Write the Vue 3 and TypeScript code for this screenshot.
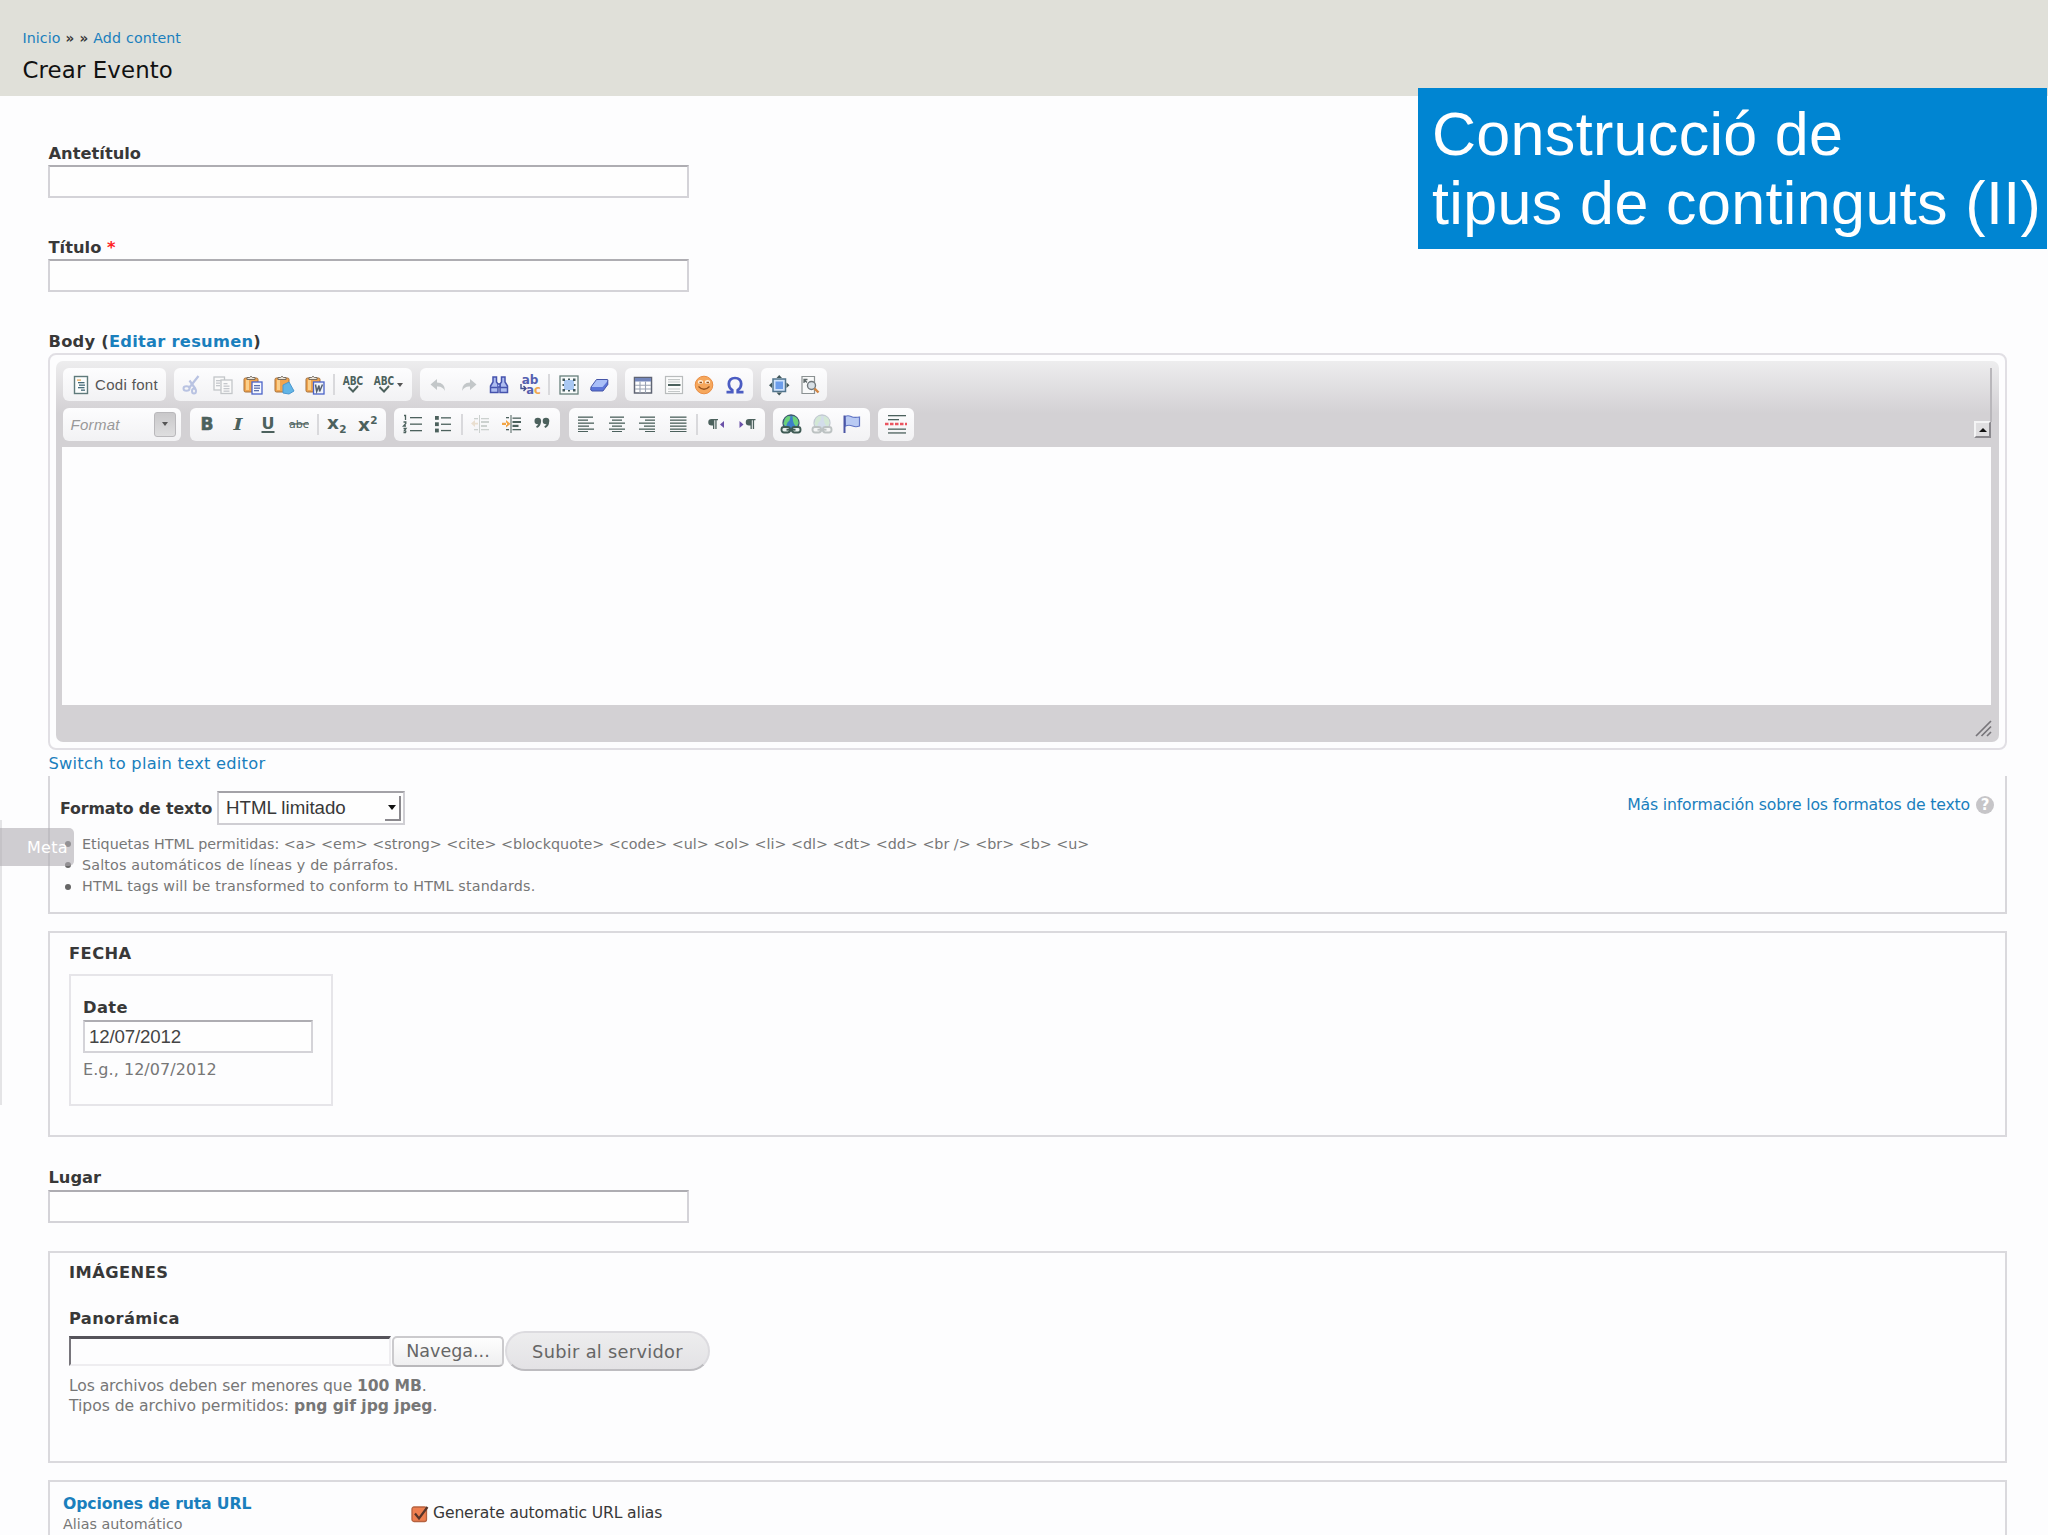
<script setup lang="ts">
interface Item { icon?: string; sep?: boolean; wide?: boolean }
const items = (s: string): Item[] => s.split(' ').map((n) => (n === '|' ? { sep: true } : { icon: n, wide: n === 'scayt' }))

const row1: Item[][] = [
  items('cut copy paste pastetext pasteword | spell scayt'),
  items('undo redo find replace | selectall eraser'),
  items('table hr smiley omega'),
  items('maximize preview'),
]
const row2: Item[][] = [
  items('bold italic underline strike | sub sup'),
  items('ol ul | outdent indent quote'),
  items('left center right justify | ltr rtl'),
  items('link unlink flag'),
  items('pagebreak'),
]

const G = '#4c615d'
const lines = (rows: number[][], c = G) =>
  rows.map(([x, y, w, h]) => `<rect x="${x}" y="${y}" width="${w}" height="${h || 1.3}" fill="${c}"/>`).join('')
const label = (t: string, x: number, y: number, size: number, extra = '', c = G) =>
  `<text x="${x}" y="${y}" font-size="${size}" text-anchor="middle" font-family="DejaVu Sans, sans-serif" font-weight="bold" fill="${c}" ${extra}>${t}</text>`
const clipboard = (front: string) =>
  `<rect x="1" y="3" width="14" height="14" rx="1.5" fill="#f0a44e" stroke="#a5703a"/><rect x="3" y="5" width="3" height="10" fill="#fbd08c"/><path d="M4 4.5V2.5h2.5Q8 0 9.500 2.500H12v2Z" fill="#ece6dc" stroke="#6d6459" stroke-width=".9"/>${front}`
const chain = (c: string, f: string) =>
  `<rect x=".5" y="13" width="8.500" height="5.500" rx="2.400" fill="${f}" stroke="${c}" stroke-width="1.900"/><rect x="11" y="13" width="8.500" height="5.500" rx="2.400" fill="${f}" stroke="${c}" stroke-width="1.900"/><path d="M5.500 15.700h9" stroke="${c}" stroke-width="1.900"/>`
const globe = (sea: string, land: string, edge: string) =>
  `<circle cx="10" cy="9" r="8" fill="${sea}" stroke="${edge}" stroke-width="1.300"/><path d="M4 4.500Q7 1 9.500 2.500L8.500 6.500 6.500 8.500 5 12.500 2.500 10ZM11.500 2Q17.500 3 17.500 9l-2 4-2.500-3-1-3Z" fill="${land}"/>`

const icons: Record<string, string> = {
  source: `<rect x="3.500" y="1.500" width="13" height="17" fill="#fbfdfd" stroke="#5f7a7b" stroke-width="1.400"/>` +
    lines([[6, 4.5, 4, 1.2]], '#e8a24a') + lines([[7, 7, 6.500, 1.3], [8, 9.5, 6, 1.3], [7, 12, 6.500, 1.3], [10, 14.500, 4, 1.300]], '#456a78'),
  cut: `<g fill="none" stroke="#b9c3e2"><path d="M16.500 1 7 13M7.500 5.500 13.500 14" stroke-width="2.200"/><ellipse cx="4.500" cy="13.500" rx="3" ry="2.200" stroke-width="2"/><ellipse cx="12" cy="16" rx="2" ry="2.600" stroke-width="2"/></g>`,
  copy: `<g fill="#fafafa" stroke="#c3c6c9" stroke-width="1.300"><rect x="1" y="2" width="10.500" height="13"/><rect x="8" y="5" width="11" height="13.500"/></g>` +
    lines([[3, 5, 5], [3, 7.500, 4], [3, 10, 4], [10.500, 8, 4], [10.500, 10.500, 6], [10.500, 13, 6], [10.500, 15.500, 6]], '#c5c8cc'),
  paste: clipboard(`<rect x="9" y="7" width="10" height="12" fill="#f6f9ff" stroke="#4a63c8" stroke-width="1.300"/>` + lines([[11, 10, 6], [11, 12.500, 6], [11, 15, 5]], '#5a6fae')),
  pastetext: clipboard(`<path d="m9 10 6-3 5 9-5 3-6-1Z" fill="#62b5e6" stroke="#4a97cf"/>`),
  pasteword: clipboard(`<rect x="8.500" y="7" width="10.500" height="12" fill="#f1f4fb" stroke="#4a63c8" stroke-width="1.300"/><path d="m10.500 9.500 1.200 7 2.300-6 .6 6L17.500 9.500" fill="none" stroke="#56616e" stroke-width="1.500"/>`),
  spell: label('ABC', 10, 10, 11.5, 'textLength="20.500" lengthAdjust="spacingAndGlyphs"') + `<path d="m5.500 12 4.500 4.500 5-5.500" fill="none" stroke="${G}" stroke-width="1.900"/>`,
  undo: `<path d="M2.500 9.500 9 4v3.500q8 0 8 8.500-2.500-5-8-4.500V15Z" fill="#c3c7c9"/>`,
  redo: `<path d="M17.500 9.500 11 4v3.500q-8 0-8 8.500 2.500-5 8-4.500V15Z" fill="#c3c7c9"/>`,
  find: `<g fill="#aebcf0" stroke="#4653ad" stroke-width="1.500"><path d="M4 2h3.500v5L9 9v8.500H1.500V11L4 7ZM16 2h-3.500v5L11 9v8.500h7.500V11L16 7Z"/><path d="M9 9h2v3H9M2 12.500h6.500M11.500 12.500h6.500"/></g>`,
  replace: label('ab', 10, 8.800, 12, '', '#5560b0') + label('a<tspan fill="#f0a850">c</tspan>', 13.500, 18.500, 11.500, '', '#5560b0') + `<path d="M1 9v4.500h4.500M3.500 11 6 13.500 3.500 16" fill="none" stroke="#44508f" stroke-width="1.400"/>`,
  selectall: `<rect x="1" y="1" width="18" height="18" fill="#f7fafa" stroke="#68807c" stroke-width="1.300"/><rect x="5" y="5" width="10" height="10" fill="#a9c8f2"/><g fill="#42585c"><path d="M3.500 3.500h2.500v2.500H3.500ZM14 3.500h2.500v2.500H14ZM3.500 14h2.500v2.500H3.500ZM14 14h2.500v2.500H14Z"/><path d="M9 3.500h2v1.500H9ZM9 15h2v1.500H9ZM3.500 9H5v2H3.500ZM15 9h1.500v2H15Z"/></g>`,
  eraser: `<path d="M7.500 4.500H18q1.500 0 .8 1.500l-5 6H2Z" fill="#a9bff8"/><path d="M2 12h11.500l5.500-6.500v4L14 16H3q-2 0-1-4Z" fill="#5b75d8"/><path d="M7.500 4.500H18q1.500 0 .8 1.500v3.500L14 16H3q-2 0-1-4Z" fill="none" stroke="#4656a8"/>`,
  table: `<rect x="1.500" y="2.500" width="17" height="15.500" fill="#fff" stroke="#5f6473" stroke-width="1.500"/><rect x="2" y="3" width="16" height="3.500" fill="#7386bb"/><path d="M2 10.200h16M2 14h16M7 6.500V18M12.500 6.500V18" stroke="#9aa3b3" stroke-width="1.100"/>`,
  hr: `<rect x="1.500" y="1.500" width="17" height="17" fill="#fcfcfc" stroke="#b9bcbd" stroke-width="1.200"/>` + lines([[4, 4, 12, 1.2], [4, 6.500, 12, 1], [4, 13.500, 12, 1], [4, 16, 12, 1]], '#c4c8c8') + lines([[4, 9, 12.500, 2]], '#4c615d'),
  smiley: `<circle cx="10" cy="10" r="8.800" fill="#f6a75c" stroke="#e98d43"/><ellipse cx="6.500" cy="7" rx="2.700" ry="2" fill="#fff1dc"/><ellipse cx="13.500" cy="7" rx="2.700" ry="2" fill="#fff1dc"/><path d="M5.500 7.500h2.500M12.500 7.500H15M4.500 11.500q5.500 5.500 11 0" fill="none" stroke="#93521d" stroke-width="1.300"/>`,
  omega: `<path d="M1.500 17.200h5.800v-2Q3.800 13 3.800 8.800 4.200 3 10 3t6.200 5.800q0 4.200-3.500 6.400v2h5.800" fill="none" stroke="#4b5cc2" stroke-width="2.700"/>`,
  maximize: `<rect x="4" y="4" width="12.500" height="12.500" fill="#cfe2fb" stroke="#51748c" stroke-width="1.500"/><rect x="6.500" y="6.500" width="7.500" height="7.500" fill="#6c9deb"/><path d="M10.200 0 7.500 3h5.500ZM10.200 20.500l-2.700-3h5.500ZM0 10.200l3-2.700v5.500ZM20.500 10.200l-3-2.700v5.500Z" fill="#41575a"/>`,
  preview: `<path d="M2 1.500h12.500v17H2Z" fill="#f8f9f9" stroke="#8b9192" stroke-width="1.200"/><path d="M4 8V4.500h3.500M4 4.500l3 3" fill="none" stroke="#606a6b" stroke-width="1.300"/><circle cx="11.500" cy="10.500" r="4" fill="#d8e0e6" stroke="#70777b" stroke-width="1.400"/><path d="m14.500 13.500 4 4" stroke="#d08542" stroke-width="2.400"/>`,
  bold: label('B', 10, 16, 17, 'stroke="#4c615d" stroke-width=".6"'),
  italic: `<text x="10" y="16" font-size="17.500" text-anchor="middle" font-family="DejaVu Serif, serif" font-weight="bold" font-style="italic" fill="${G}" textLength="9" lengthAdjust="spacingAndGlyphs">I</text>`,
  underline: label('U', 10, 14.500, 16) + lines([[3.5, 17, 13, 2]]),
  strike: `<text x="10" y="13.500" font-size="11" text-anchor="middle" font-family="DejaVu Sans, sans-serif" fill="${G}">abc</text>` + lines([[0, 9.300, 20, 1.3]]),
  sub: label('x', 6, 14.500, 18.500) + label('2', 15.800, 19, 10.500),
  sup: label('x', 6, 16.500, 18.500) + label('2', 15.800, 9.500, 10.500),
  ol: lines([[8, 3, 12], [8, 9.500, 12], [8, 16, 12]]) + `<path d="M2 1.500h1.500V6M1.500 8h2.300v1.500L1.500 12h2.500M1.500 14.500H4L2.500 16.500q2 0 1 2h-2" fill="none" stroke="${G}" stroke-width="1.300"/>`,
  ul: lines([[2, 2, 3.800, 3.800], [2, 8.300, 3.800, 3.800], [2, 14.600, 3.800, 3.800], [8, 3.200, 10], [8, 9.600, 10], [8, 15.900, 10]]),
  outdent: lines([[8, 1, 1, 18], [3, 4, 4], [10, 4, 8], [10, 7, 8, 2], [10, 11, 6, 2], [3, 15, 4], [10, 15, 8]], '#ccd1cf') + `<path d="M0 9.500 4 6v7ZM3 8.700h4v1.800H3Z" fill="#eadfd0"/>`,
  indent: lines([[8.500, 1, 1, 18], [4, 3, 3], [10.500, 3.500, 8.500], [10.500, 7, 8.500, 2], [10.500, 10.800, 6, 2.200], [4, 15, 3], [10.500, 15, 8.500]]) + `<path d="M8.500 9.800 4 6v7.600ZM0 8.700h5v2.200H0Z" fill="#f2a545"/>`,
  quote: `<g fill="${G}"><circle cx="5.800" cy="7" r="3.300"/><circle cx="14" cy="7" r="3.300"/></g><path d="M7.700 7.500Q8 11.500 4.500 13.200M16 7.500Q16.300 11.500 12.700 13.200" fill="none" stroke="${G}" stroke-width="2"/>`,
  left: lines([[2, 2.500, 15], [2, 5.500, 10], [2, 8.500, 16], [2, 11.500, 11], [2, 14.500, 16], [2, 17, 10, 1]]),
  center: lines([[3, 2.500, 14], [5, 5.500, 10], [2, 8.500, 16], [5, 11.500, 10], [2, 14.500, 16], [5, 17, 10, 1]]),
  right: lines([[3, 2.500, 15], [8, 5.500, 10], [2, 8.500, 16], [7, 11.500, 11], [2, 14.500, 16], [8, 17, 10, 1]]),
  justify: lines([[2, 2.500, 16.500], [2, 5.500, 16.500], [2, 8.500, 16.500], [2, 11.500, 16.500], [2, 14.500, 16.500], [2, 17, 16.500, 1]]),
  ltr: `<path d="M11 5H5.500a3 3 0 0 0 0 6.500H7V15h1.300V6.300h1V15h1.300V6.300H12V5Z" fill="${G}"/><path d="M18 7v7l-4-3.500Z" fill="#6a50a8"/>`,
  rtl: `<path d="M17.500 5H12a3 3 0 0 0 0 6.500h1.500V15h1.300V6.300h1V15h1.300V6.300h1.400V5Z" fill="${G}"/><path d="M2.500 7v7l4-3.500Z" fill="#6a50a8"/>`,
  link: globe('#3d7fc9', '#6bd27a', '#40586e') + chain('#3f5b54', '#e9f1ee'),
  unlink: globe('#d3ddea', '#d3e8d5', '#c3cad2') + chain('#bcc2c2', '#f4f5f5'),
  flag: `<path d="M3 2.500Q6 1 9 2.500t8.500.5v9Q14 13.500 10.500 12T3.500 12Z" fill="#b9caf3" stroke="#6074c4" stroke-width="1.200"/><path d="M2.500 1.500v17.500" stroke="#4c56a5" stroke-width="2"/>`,
  pagebreak: lines([[2, 1, 18], [2, 5, 11], [2, 14.500, 18], [2, 18.300, 18]]) + `<path d="M-1 10h22" stroke="#ea5560" stroke-width="2.600" stroke-dasharray="3.500 1.500"/>`,
}
icons.scayt = icons.spell
</script>

<template>
  <div class="page">
    <header class="head">
      <nav class="crumb"><a>Inicio</a> <b>»</b> <b>»</b> <a>Add content</a></nav>
      <h1>Crear Evento</h1>
    </header>
    <div class="banner"><div>Construcció de</div><div class="second">tipus de continguts (II)</div></div>

    <main class="form">
      <div class="field"><label>Antetítulo</label><div class="input"></div></div>
      <div class="field"><label>Título <i class="req">*</i></label><div class="input"></div></div>

      <label class="body-label">Body (<a>Editar resumen</a>)</label>
      <section class="editor">
        <div class="chrome">
          <div class="bar first">
            <div class="group source"><svg viewBox="0 0 20 20" v-html="icons.source"></svg><span>Codi font</span></div>
            <div v-for="(g, k) in row1" :key="k" class="group">
              <template v-for="(it, n) in g" :key="n">
                <span v-if="it.sep" class="sep"></span>
                <span v-else class="cell" :class="{ wide: it.wide }"><svg viewBox="0 0 20 20" v-html="icons[it.icon!]"></svg><b v-if="it.wide" class="caret"></b></span>
              </template>
            </div>
          </div>
          <div class="bar second-row">
            <div class="group format"><span>Format</span><span class="drop"><b class="caret"></b></span></div>
            <div v-for="(g, k) in row2" :key="k" class="group">
              <template v-for="(it, n) in g" :key="n">
                <span v-if="it.sep" class="sep"></span>
                <span v-else class="cell"><svg viewBox="0 0 20 20" v-html="icons[it.icon!]"></svg></span>
              </template>
            </div>
          </div>
          <div class="canvas"></div>
          <span class="edge"></span>
          <span class="collapse"><b></b></span>
          <svg class="grip" viewBox="0 0 17 17"><path d="M1 16 16 1M6.500 16 16 6.500M12 16l4-4" stroke="#77757a" stroke-width="1.700" /></svg>
        </div>
      </section>
      <a class="switch">Switch to plain text editor</a>

      <section class="filter">
        <div class="filter-row">
          <b class="lbl">Formato de texto</b>
          <div class="select"><span>HTML limitado</span><span class="arrow"><b></b></span></div>
          <a class="help"><span>Más información sobre los formatos de texto</span><span class="q">?</span></a>
        </div>
        <ul>
          <li class="tags">Etiquetas HTML permitidas: &lt;a&gt; &lt;em&gt; &lt;strong&gt; &lt;cite&gt; &lt;blockquote&gt; &lt;code&gt; &lt;ul&gt; &lt;ol&gt; &lt;li&gt; &lt;dl&gt; &lt;dt&gt; &lt;dd&gt; &lt;br /&gt; &lt;br&gt; &lt;b&gt; &lt;u&gt;</li>
          <li class="spaced">Saltos automáticos de líneas y de párrafos.</li>
          <li class="spaced">HTML tags will be transformed to conform to HTML standards.</li>
        </ul>
      </section>

      <section class="set fecha">
        <h2>FECHA</h2>
        <div class="date">
          <label>Date</label>
          <div class="input">12/07/2012</div>
          <p>E.g., 12/07/2012</p>
        </div>
      </section>

      <div class="field lugar"><label>Lugar</label><div class="input"></div></div>

      <section class="set imagenes">
        <h2>IMÁGENES</h2>
        <label>Panorámica</label>
        <div class="upload">
          <div class="file"></div>
          <button class="browse">Navega...</button>
          <button class="send">Subir al servidor</button>
        </div>
        <p class="limit">Los archivos deben ser menores que <b>100 MB</b>.</p>
        <p>Tipos de archivo permitidos: <b>png gif jpg jpeg</b>.</p>
      </section>

      <section class="set url">
        <div class="tab"><a>Opciones de ruta URL</a><small>Alias automático</small></div>
        <div class="check">
          <svg viewBox="0 0 18 18"><rect x="1" y="2" width="14.500" height="14.500" rx="2" fill="#ee7f50" stroke="#b5623f" stroke-width="1.300" /><path d="m4 8.500 4 5L16.500 2" fill="none" stroke="#57352a" stroke-width="2.200" /></svg>
          <span>Generate automatic URL alias</span>
        </div>
      </section>
    </main>

    <div class="drawer-shadow"></div>
    <div class="meta">Meta</div>
  </div>
</template>

<style>
body { margin: 0; overflow: hidden; background: #fdfdfe; }
</style>
<style scoped>
* { box-sizing: border-box; }
.page { position: relative; width: 2048px; height: 1535px; overflow: hidden; background: #fdfdfe; color: #383838; font: 16px "DejaVu Sans", sans-serif; }
a { color: #1a7fbd; }
.head { height: 96px; padding: 28px 0 0 22.500px; background: #e0e0d9; }
.crumb { height: 20px; line-height: 20px; font-size: 14.200px; letter-spacing: .07px; word-spacing: .5px; }
.crumb b { font-size: 13.500px; }
h1 { margin: 8px 0 0; font-weight: normal; font-size: 22.800px; line-height: 28px; letter-spacing: .15px; color: #111; }
.banner { position: absolute; left: 1418px; top: 88px; width: 629px; height: 161px; padding: 12px 0 0 14px; background: #0085d2; color: #fff; font: 61px/69px "Liberation Sans", sans-serif; letter-spacing: .32px; white-space: nowrap; }
.second { letter-spacing: .38px; }
.form { padding: 47px 41px 0 48px; white-space: nowrap; }
label { display: block; height: 21px; margin-bottom: 1px; padding-left: .5px; font-weight: bold; font-size: 16.300px; line-height: 21px; }
.body-label { letter-spacing: .25px; }
.req { color: #f22; font-style: normal; }
.field { margin-bottom: 39px; }
.input { width: 641px; height: 33px; border: 2px solid #d4d3d8; border-top-color: #aeadb2; background: #fefefe; }
.editor { height: 397px; padding: 6px; border: 2px solid #e1dfe4; border-radius: 8px; }
.chrome { position: relative; height: 381px; padding: 7px 8px 0 6px; border-radius: 7px; background: linear-gradient(#ededee, #d3d1d4 52px); }
.bar { display: flex; gap: 8px; height: 33px; margin-bottom: 6.500px; padding-left: 1px; }
.second-row { gap: 8.500px; }
.group { display: flex; align-items: center; height: 33px; padding: 0 2.500px; border-radius: 6px; background: linear-gradient(#fdfdfe, #f2f2f4); }
.cell { display: flex; align-items: center; justify-content: center; width: 30.550px; height: 33px; }
.first .cell { width: 30.700px; }
.cell svg { flex: none; width: 20px; height: 20px; overflow: visible; }
.first .wide { width: 41px; justify-content: flex-start; padding-left: 5px; gap: 3px; }
.sep { width: 2px; height: 21px; margin: 0 3px; background: #d9d9dc; }
.caret { border: 3.500px solid transparent; border-top: 4px solid #555; border-bottom: 0; }
.source { width: 103px; padding-left: 7.500px; gap: 4.500px; font: 15px "Liberation Sans", sans-serif; letter-spacing: .33px; color: #555; }
.source svg { width: 20px; height: 20px; }
.format { width: 118px; padding: 0 5px 0 7.500px; justify-content: space-between; font: italic 15px "Liberation Sans", sans-serif; letter-spacing: .3px; color: #999; }
.drop { display: flex; align-items: center; justify-content: center; width: 22px; height: 25px; border: 1px solid #b9b8bb; border-radius: 3px; background: linear-gradient(#c9c8ca, #dededf); }
.canvas { height: 258px; margin-top: 6px; background: #fdfdfe; }
.edge { position: absolute; right: 7px; top: 7px; width: 2px; height: 54px; background: #b9b7bb; }
.collapse { position: absolute; right: 8px; top: 60px; width: 17px; height: 17px; display: flex; align-items: center; justify-content: center; border: 2px solid; border-color: #f4f4f5 #8b898e #8b898e #f4f4f5; background: #dfdee0; }
.collapse b { border: 4px solid transparent; border-bottom: 4px solid #111; border-top: 0; }
.grip { position: absolute; right: 7px; bottom: 5px; width: 17px; height: 17px; }
.switch { display: block; height: 20px; margin: 4px 0 2px .5px; line-height: 20px; font-size: 16.300px; letter-spacing: .23px; }
.filter { height: 138px; padding: 15px 10px 0; border: 2px solid #d8d7db; border-top: 0; }
.filter-row { display: flex; align-items: center; height: 34px; }
.lbl { width: 152px; font-size: 15.800px; letter-spacing: -.12px; }
.select { display: flex; align-items: center; justify-content: space-between; width: 188px; height: 34px; margin-left: 5px; padding: 0 2px 0 7px; border: 2px solid #cfced3; border-top-color: #a3a2a7; font: 18.700px "Liberation Sans", sans-serif; background: #fefefe; }
.arrow { display: flex; align-items: center; justify-content: center; width: 16px; height: 25px; border-right: 2px solid #8b898e; border-bottom: 2px solid #8b898e; }
.arrow b { border: 4px solid transparent; border-top: 5px solid #111; border-bottom: 0; }
.help { display: flex; align-items: center; margin: 0 1px 7px auto; font-size: 15.700px; letter-spacing: -.17px; }
.q { display: flex; align-items: center; justify-content: center; width: 18px; height: 18px; margin-left: 6px; border-radius: 50%; background: #c6c5c8; color: #fff; font-size: 15px; font-weight: bold; }
ul { margin: 8.500px 0 0; padding: 0; list-style: none; font-size: 14.300px; line-height: 21.300px; color: #777; }
li { display: flex; align-items: center; padding-left: 5px; }
.spaced { letter-spacing: .16px; }
li::before { content: ""; width: 6px; height: 6px; margin-right: 11px; border-radius: 50%; background: #666; }
.set { border: 2px solid #dad9dd; }
h2 { margin: 0; font-size: 16.300px; line-height: 20px; letter-spacing: .45px; }
p { margin: 0; color: #777; }
.fecha { height: 206px; margin-top: 17px; padding: 11px 19px 0; }
.date { width: 264px; height: 132px; margin-top: 10px; padding: 21px 12px 0; border: 2px solid #e6e5e9; }
.date label { padding: 0; letter-spacing: .4px; margin-bottom: 2px; }
.date .input { width: 230px; padding-left: 4px; font: 18.700px/29px "Liberation Sans", sans-serif; letter-spacing: -.15px; color: #444; }
.date p { margin-top: 7px; line-height: 20px; letter-spacing: .05px; }
.lugar { margin: 30px 0 28px; }
.lugar label { margin-bottom: 2px; }
.imagenes { height: 212px; padding: 10px 19px 0; }
.imagenes label { margin-top: 25px; padding: 0; letter-spacing: .34px; }
.upload { display: flex; align-items: center; height: 40px; margin-top: 2px; }
.file { width: 322px; height: 30px; border: 2px solid #eeedf0; border-top: 3px solid #55535a; border-left: 2px solid #77757b; }
button { padding: 0; font: 17.500px "DejaVu Sans", sans-serif; color: #666; }
.browse { width: 112px; height: 31px; margin-left: 1px; border: 2px solid #cbcacd; border-bottom-color: #b9b8bb; border-radius: 5px; background: linear-gradient(#fefefe, #efeff0); }
.send { width: 205px; height: 40px; margin-left: 1px; border: 2px solid #dcdbdf; border-bottom-color: #bdbcc0; border-radius: 20px; background: linear-gradient(#ededee, #e3e2e5); font-size: 17.800px; letter-spacing: .3px; }
.imagenes p { font-size: 15.600px; line-height: 19.500px; letter-spacing: -.03px; }
.imagenes .limit { margin-top: 6px; letter-spacing: -.1px; }
.url { display: flex; height: 80px; margin-top: 17px; padding: 11px 13px; }
.tab { width: 348px; }
.tab a { display: block; height: 21px; line-height: 21px; font-size: 15.700px; font-weight: bold; letter-spacing: -.15px; }
.tab small { display: block; font-size: 14.300px; line-height: 20px; color: #777; }
.check { display: flex; align-items: center; height: 20px; margin-top: 11px; gap: 4px; font-size: 15.600px; letter-spacing: -.15px; }
.check svg { width: 18px; height: 18px; }
.check span { margin-top: -2px; }
.drawer-shadow { position: absolute; left: 0; top: 820px; width: 2px; height: 285px; background: #e4e4e6; }
.meta { position: absolute; left: 0; top: 828px; width: 74px; height: 38px; padding-left: 27px; border-radius: 0 5px 5px 0; background: rgba(176, 174, 178, .6); color: #fff; font-size: 16px; letter-spacing: .3px; line-height: 40px; }
</style>
